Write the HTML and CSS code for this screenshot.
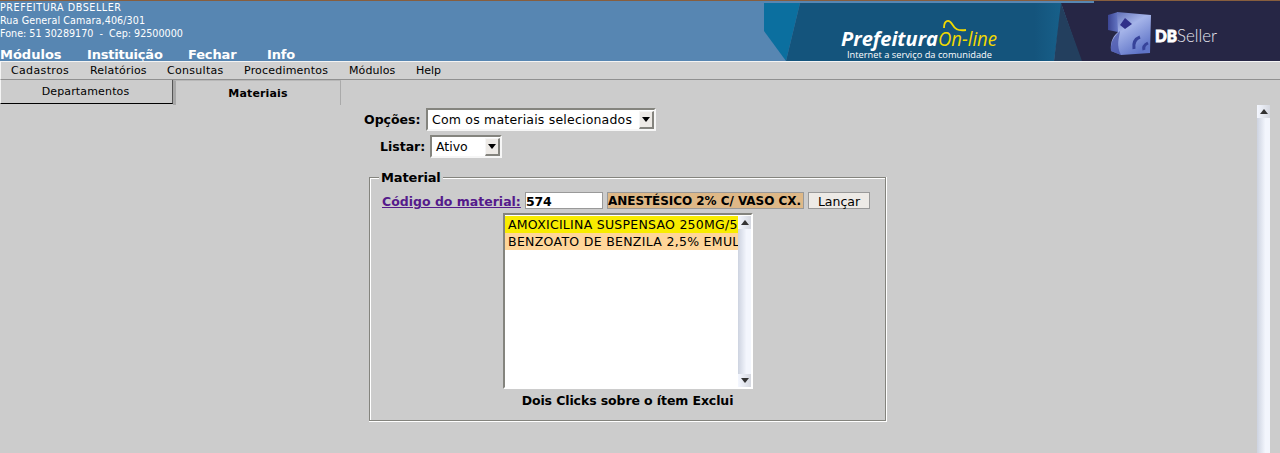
FILE: index.html
```html
<!DOCTYPE html>
<html lang="pt-BR">
<head>
<meta charset="utf-8">
<title>Prefeitura On-line</title>
<link rel="stylesheet" href="styles.css">
</head>
<body>
<header class="header">
  <div class="header-left">
    <div class="address">
      <div class="org">PREFEITURA DBSELLER</div>
      <div class="street">Rua General Camara,406/301</div>
      <div class="phone">Fone: 51 30289170 &nbsp;-&nbsp; Cep: 92500000</div>
    </div>
    <nav class="main-nav"><a class="nav-modulos">Módulos</a><a class="nav-inst">Instituição</a><a class="nav-fechar">Fechar</a><a>Info</a></nav>
  </div>
  <svg class="banner" width="516" height="60" viewBox="0 0 516 60">
    <defs>
      <linearGradient id="cube" x1="0" y1="0" x2="0.6" y2="1">
        <stop offset="0" stop-color="#5564b0"/><stop offset=".45" stop-color="#a5b4e9"/><stop offset="1" stop-color="#6075c8"/>
      </linearGradient>
      <linearGradient id="side" x1="0" y1="0" x2="1" y2="0">
        <stop offset="0" stop-color="#3b4593"/><stop offset="1" stop-color="#6576c4"/>
      </linearGradient>
      <linearGradient id="teal" x1="0" y1="0" x2="1" y2="0">
        <stop offset="0" stop-color="#14547c"/><stop offset=".9" stop-color="#14547c"/><stop offset="1" stop-color="#17608a"/>
      </linearGradient>
    </defs>
    <path fill="#0b6f9f" d="M0 2H36L22 60L0 30Z"/>
    <path fill="url(#teal)" d="M36 2H298L290 60H22Z"/>
    <path fill="#262645" d="M297 2H330V0H516V60H317Z"/>
    <path fill="#233f5e" d="M297 2L318 60H290Z"/>
    <text class="brand" x="77" y="45" textLength="97" lengthAdjust="spacingAndGlyphs">Prefeitura</text>
    <text class="brand-on" x="174" y="45" textLength="59" lengthAdjust="spacingAndGlyphs">On-line</text>
    <path d="M180 27C180 19 185 18 188 23S193 30 202 29" fill="none" stroke="#f2d900" stroke-width="1.8"/>
    <text class="brand-sub" x="83" y="57" textLength="145" lengthAdjust="spacingAndGlyphs">Internet a serviço da comunidade</text>
    <path fill="url(#side)" d="M344 14L354 11V31L344 29Z"/>
    <path fill="url(#cube)" d="M353 11L387 14L386 52L357 54L347 50C346 39 350 35 354 31Z"/>
    <path fill="#3b459f" opacity=".65" d="M347 50C346 39 352 34 356 30C355 38 352 44 357 54Z"/>
    <path fill="#30308a" d="M361 17L368 23L361 28L356 24Z"/>
    <path fill="none" stroke="#37439a" stroke-width="3" d="M370 48C369 42 371 38 376 36M380 49C379 46 380 44 384 42"/>
    <text class="db" x="391" y="41" textLength="22" lengthAdjust="spacingAndGlyphs">DB</text>
    <text class="seller" x="413" y="41" textLength="40" lengthAdjust="spacingAndGlyphs">Seller</text>
  </svg>
</header>

<nav class="menubar">
  <a class="m1">Cadastros</a><a class="m2">Relatórios</a><a class="m3">Consultas</a><a class="m4">Procedimentos</a><a class="m5">Módulos</a><a>Help</a>
</nav>

<div class="tabs">
  <div class="tab">Departamentos</div>
  <div class="tab tab-active">Materiais</div>
</div>

<main class="content">
  <form class="filters">
    <div class="field field-options">
      <span class="label label-options">Opções:</span>
      <div class="select select-options"><span>Com os materiais selecionados</span><i class="drop"></i></div>
    </div>
    <div class="field field-list">
      <span class="label label-list">Listar:</span>
      <div class="select select-list"><span>Ativo</span><i class="drop"></i></div>
    </div>
    <fieldset class="material">
      <legend>Material</legend>
      <div class="code-row">
        <a class="code-link">Código do material:</a>
        <div class="input code">574</div>
        <div class="input description">ANESTÉSICO 2% C/ VASO CX.</div>
        <div class="launch">Lançar</div>
      </div>
      <div class="listbox">
        <div class="items">
          <div class="item selected">AMOXICILINA SUSPENSAO 250MG/5M</div>
          <div class="item benzoato">BENZOATO DE BENZILA 2,5% EMUL</div>
        </div>
        <div class="scroll"><i class="arrow up"></i><i class="arrow down"></i></div>
      </div>
      <div class="hint">Dois Clicks sobre o ítem Exclui</div>
    </fieldset>
  </form>
  <div class="scroll page-scroll"><i class="arrow up"></i></div>
</main>
</body>
</html>
```
FILE: styles.css
```css
* { box-sizing: border-box; }
body { margin: 0; width: 1280px; height: 453px; overflow: hidden; background: #ccc; color: #000; font-family: "DejaVu Sans", sans-serif; font-size: 13px; display: flex; flex-direction: column; }
.header { height: 61px; flex: none; display: flex; justify-content: space-between; background: #5786b2; border-top: 1px solid #875e3e; }
.address { color: #fff; font-size: 9.6px; line-height: 13px; height: 45px; white-space: nowrap; }
.org { letter-spacing: 0.55px; }
.street { letter-spacing: 0.1px; }
.main-nav { display: flex; color: #fff; font-weight: bold; font-size: 13px; line-height: 17px; height: 15px; letter-spacing: -0.15px; }
.nav-modulos { width: 87px; letter-spacing: 0; }
.nav-inst { width: 101px; letter-spacing: -0.2px; }
.nav-fechar { width: 79px; }
.banner { display: block; flex: none; }
.brand { font: italic bold 20px "Open Sans", sans-serif; fill: #fff; }
.brand-on { font: italic 20px "Open Sans", sans-serif; fill: #f2d900; }
.brand-sub { font: 9px "Open Sans", sans-serif; fill: #fff; }
.db { font: 900 17px Lato, sans-serif; fill: #fff; stroke: #fff; stroke-width: 0.9px; }
.seller { font: 300 17px Lato, sans-serif; fill: #e6e6f0; }

.menubar { height: 19px; flex: none; display: flex; padding-left: 10px; font-size: 11px; line-height: 17px; background: #d0d0d0; border-top: 1px solid #f4f4f4; border-left: 1px solid #f4f4f4; border-bottom: 1px solid #909090; }
.m1 { width: 79px; letter-spacing: 0.35px; }
.m2 { width: 77px; letter-spacing: 0.2px; }
.m3 { width: 77px; letter-spacing: 0.3px; }
.m4 { width: 105px; letter-spacing: 0.2px; }
.m5 { width: 67px; letter-spacing: 0.1px; }

.tabs { height: 25px; flex: none; display: flex; font-size: 11px; text-align: center; }
.tab { width: 173px; height: 24px; line-height: 23px; letter-spacing: 0.15px; border-left: 1px solid #f4f4f4; border-right: 1px solid #555; border-bottom: 1px solid #000; padding-right: 2px; }
.tab-active { width: 168px; height: 25px; line-height: 25px; font-weight: bold; border-left: 3px solid #a8a8a8; border-top: 1px solid #b8b8b8; border-right: 1px solid #aaa; border-bottom: 0; padding-right: 0; }

.content { flex: 1; display: flex; justify-content: space-between; padding-right: 10px; }
.filters { padding: 3px 0 0 364px; }
.field { display: flex; line-height: 24px; }
.field-options { height: 27px; }
.field-list { height: 35px; padding-left: 16px; }
.label { font-weight: bold; flex: none; white-space: nowrap; font-size: 12.5px; }
.label-options { width: 62px; }
.label-list { width: 50px; }
.select { height: 23px; display: flex; justify-content: space-between; padding: 0 0 0 4px; line-height: 20px; background: #fff; border: 2px solid; border-color: #84847e #f6f6f6 #f6f6f6 #84847e; white-space: nowrap; font-size: 12.5px; }
.select-options { width: 230px; letter-spacing: 0.2px; }
.select-list { width: 72px; }
.drop { width: 15px; height: 18px; flex: none; margin-top: 1px; display: flex; align-items: center; justify-content: center; background: #edeae6; border: 1px solid #f6f6f6; border-right: 2px solid #84847e; border-bottom: 2px solid #84847e; }
.drop::before { content: ""; border: 4px solid transparent; border-top: 5px solid #000; border-bottom: 0; }

.material { margin: 0 0 0 5px; width: 517px; height: 251px; padding: 7px 11px 0 12px; border: 1px solid #84847e; box-shadow: inset 1px 0 #fff, 1px 0 #fff, 0 1px #fff, 1px 1px #fff, inset 0 1px #fff; min-width: 0; }
.material legend { font-weight: bold; padding: 0 2px; margin-left: -3px; line-height: 15px; letter-spacing: -0.15px; background: #ccc; }
.code-row { display: flex; height: 21px; gap: 4px; line-height: 17px; }
.code-link { color: #551a8b; font-weight: bold; text-decoration: underline; width: 139px; white-space: nowrap; line-height: 19px; font-size: 12.5px; }
.input { width: 78px; height: 17px; border: 1px solid #999; background: #fff; font-weight: bold; white-space: nowrap; }
.code { font-size: 12.5px; letter-spacing: -0.2px; }
.description { width: 197px; background: #deb887; font-size: 12px; letter-spacing: -0.05px; }
.launch { width: 62px; height: 17px; border: 1px solid #999; background: #edeae6; text-align: center; font-size: 12.5px; }
.listbox { width: 250px; height: 176px; margin-left: 121px; display: flex; border: 2px solid; border-color: #84847e #fff #fff #84847e; background: #fff; padding: 1px 0 0; }
.items { flex: 1; min-width: 0; overflow: hidden; }
.item { height: 17px; line-height: 17px; padding-left: 3px; background: #ffd699; white-space: nowrap; font-size: 12.5px; letter-spacing: 0.26px; }
.benzoato { letter-spacing: 0.3px; }
.selected { background: #f8ec00; }
.scroll { width: 13px; flex: none; display: flex; flex-direction: column; justify-content: space-between; background: linear-gradient(90deg, #cdd3e0, #f3f6fd 65%, #f3f6fd); }
.arrow { height: 13px; display: flex; align-items: center; justify-content: center; background: linear-gradient(90deg, #f4f7ff, #d5d8e0); }
.arrow::before { content: ""; border: 4px solid transparent; }
.up::before { border-top: 0; border-bottom: 5px solid #333; }
.down::before { border-bottom: 0; border-top: 5px solid #333; }
.hint { width: 251px; margin: 4px 0 0 120px; text-align: center; font-weight: bold; line-height: 16px; font-size: 12.5px; letter-spacing: -0.1px; }
```
